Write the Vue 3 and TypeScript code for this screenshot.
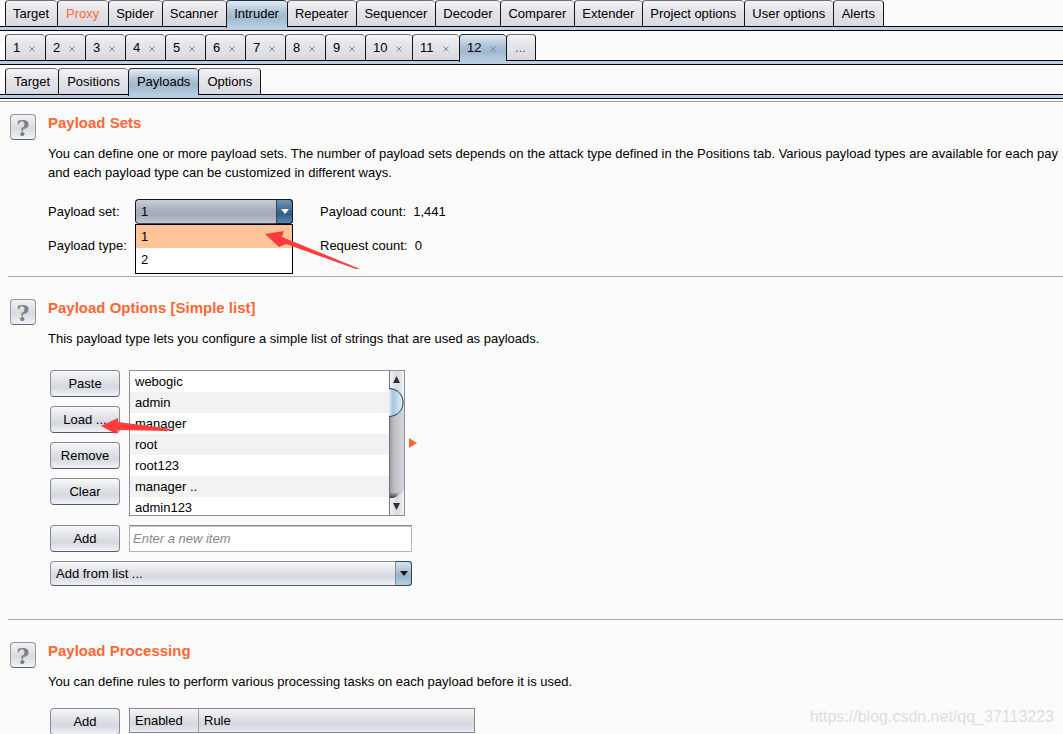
<script setup lang="ts">
import { ref } from 'vue'

interface Tab {
  label: string
  alert?: boolean
}

const toolTabs: Tab[] = [
  { label: 'Target' },
  { label: 'Proxy', alert: true },
  { label: 'Spider' },
  { label: 'Scanner' },
  { label: 'Intruder' },
  { label: 'Repeater' },
  { label: 'Sequencer' },
  { label: 'Decoder' },
  { label: 'Comparer' },
  { label: 'Extender' },
  { label: 'Project options' },
  { label: 'User options' },
  { label: 'Alerts' },
]
const attackTabs: string[] = ['1', '2', '3', '4', '5', '6', '7', '8', '9', '10', '11', '12']
const panelTabs: string[] = ['Target', 'Positions', 'Payloads', 'Options']
const listActions: string[] = ['Paste', 'Load ...', 'Remove', 'Clear']
const payloads: string[] = ['webogic', 'admin', 'manager', 'root', 'root123', 'manager ..', 'admin123']
const setOptions: string[] = ['1', '2']

const activeTool = ref('Intruder')
const activeAttack = ref('12')
const activePanel = ref('Payloads')
const payloadSet = ref('1')
const newItem = ref('')
</script>

<template>
  <div class="page">
    <nav class="tabs">
      <button
        v-for="tab in toolTabs"
        :key="tab.label"
        type="button"
        class="tab tool"
        :class="{ active: tab.label === activeTool, alert: tab.alert }"
        @click="activeTool = tab.label"
      >{{ tab.label }}</button>
    </nav>
    <div class="rail"></div>

    <nav class="tabs">
      <button
        v-for="tab in attackTabs"
        :key="tab"
        type="button"
        class="tab numbered"
        :class="{ active: tab === activeAttack, double: tab.length > 1 }"
        @click="activeAttack = tab"
      >
        <span>{{ tab }}</span>
        <svg class="cross" viewBox="0 0 6 6" aria-hidden="true">
          <path d="M.5 .5 5.500 5.500M5.500 .5 .5 5.500" />
        </svg>
      </button>
      <button type="button" class="tab more">...</button>
    </nav>
    <div class="rail"></div>

    <nav class="tabs">
      <button
        v-for="tab in panelTabs"
        :key="tab"
        type="button"
        class="tab panel"
        :class="{ active: tab === activePanel }"
        @click="activePanel = tab"
      >{{ tab }}</button>
    </nav>
    <div class="rail"></div>

    <main class="content">
      <section class="section first">
        <button type="button" class="help">?</button>
        <div class="body">
          <h2>Payload Sets</h2>
          <p>
            You can define one or more payload sets. The number of payload sets depends on the attack type defined in the Positions tab. Various payload types are available for each pay<br />
            and each payload type can be customized in different ways.
          </p>
          <div class="fields">
            <label for="payload-set">Payload set:</label>
            <div class="combo dark">
              <select id="payload-set" v-model="payloadSet">
                <option v-for="o in setOptions" :key="o">{{ o }}</option>
              </select>
              <span class="drop"><svg viewBox="0 0 8 5"><path d="M0 0h8L4 5z" /></svg></span>
              <ul class="popup">
                <li
                  v-for="o in setOptions"
                  :key="o"
                  :class="{ chosen: o === payloadSet }"
                  @click="payloadSet = o"
                >{{ o }}</li>
              </ul>
              <svg class="pointer to-option" viewBox="0 0 96 40" aria-hidden="true">
                <path d="M0 3 19 0 17 6 95 38 91 38 21 13 14 16z" />
              </svg>
            </div>
            <span class="count">Payload count:&nbsp; 1,441</span>
            <span>Payload type:</span>
            <span></span>
            <span class="count">Request count:&nbsp; 0</span>
          </div>
        </div>
      </section>

      <section class="section options">
        <button type="button" class="help">?</button>
        <div class="body">
          <h2>Payload Options [Simple list]</h2>
          <p>This payload type lets you configure a simple list of strings that are used as payloads.</p>
          <div class="editor">
            <div class="actions">
              <div v-for="a in listActions" :key="a" class="action">
                <button type="button" class="btn">{{ a }}</button>
                <svg v-if="a === 'Load ...'" class="pointer to-load" viewBox="0 0 72 17" aria-hidden="true">
                  <path d="M0 8 17 0 17 4 71 11 66 13 17 12 15 16z" />
                </svg>
              </div>
            </div>
            <div class="listing">
              <ul class="items">
                <li v-for="(p, i) in payloads" :key="i">{{ p }}</li>
              </ul>
              <svg class="scroll" viewBox="0 0 15 144" aria-hidden="true">
                <defs>
                  <linearGradient id="track"><stop offset="0" stop-color="#96979e" /><stop offset=".35" stop-color="#bfc0c6" /><stop offset="1" stop-color="#d6d7dc" /></linearGradient>
                  <linearGradient id="cap"><stop offset="0" stop-color="#f4f5f6" /><stop offset=".55" stop-color="#d5d9dc" /><stop offset="1" stop-color="#f2f4f5" /></linearGradient>
                  <linearGradient id="thumb"><stop offset="0" stop-color="#dcebf6" /><stop offset=".3" stop-color="#a9c4dc" /><stop offset=".6" stop-color="#c2dbed" /><stop offset="1" stop-color="#dcf2fd" /></linearGradient>
                  <linearGradient id="shade" x2="0" y2="1"><stop offset="0" stop-color="#444" stop-opacity="0" /><stop offset="1" stop-color="#333" /></linearGradient>
                </defs>
                <rect width="15" height="144" fill="url(#track)" />
                <path d="M0 0h15v30Q13 17 0 17z" fill="url(#cap)" />
                <path d="M0 121h11L6 127H0z" fill="url(#shade)" />
                <path d="M0 144V127h3Q11 126 15 119v25z" fill="url(#cap)" />
                <path d="M0 17.500Q14 18 14 31.500T0 45.500z" fill="url(#thumb)" />
                <path d="M0 17.500C9 18 14 24 14 31.500S9 45 0 45.500" fill="none" stroke="#243d54" />
                <path d="M.5 0v17M.5 46v98" stroke="#74767f" fill="none" />
                <path d="M7.500 5 11 12H4zM4 132h7L7.500 139z" fill="#2e2f31" />
              </svg>
            </div>
            <svg class="marker" viewBox="0 0 8 10" aria-hidden="true"><path d="M0 0 8 5 0 10z" /></svg>
          </div>
          <div class="entry">
            <button type="button" class="btn">Add</button>
            <input v-model="newItem" type="text" placeholder="Enter a new item" aria-label="Enter a new item" />
          </div>
          <div class="combo light">
            <select aria-label="Add from list ...">
              <option>Add from list ...</option>
            </select>
            <span class="drop"><svg viewBox="0 0 8 5"><path d="M0 0h8L4 5z" /></svg></span>
          </div>
        </div>
      </section>

      <section class="section">
        <button type="button" class="help">?</button>
        <div class="body">
          <h2>Payload Processing</h2>
          <p>You can define rules to perform various processing tasks on each payload before it is used.</p>
          <div class="rules">
            <button type="button" class="btn">Add</button>
            <table>
              <thead>
                <tr><th class="enabled">Enabled</th><th>Rule</th></tr>
              </thead>
            </table>
          </div>
        </div>
      </section>
    </main>
    <div class="watermark">https://blog.csdn.net/qq_37113223</div>
  </div>
</template>

<style>
body {
  margin: 0;
  background: #fbfbfb;
}
</style>

<style scoped>
.page {
  position: relative;
  height: 100vh;
  overflow: hidden;
  font: 13px/19px "Liberation Sans", Arial, sans-serif;
  color: #000;
  background: #fbfbfb;
}
.page * {
  box-sizing: border-box;
}
button,
select,
input {
  font: inherit;
  color: inherit;
  margin: 0;
}
svg {
  display: block;
}
ul {
  list-style: none;
  margin: 0;
  padding: 0;
}

/* tab strips */
.tabs {
  display: flex;
  height: 26px;
  padding-left: 5px;
}
.tabs ~ .tabs {
  margin-top: 3px;
}
.tab {
  flex: none;
  height: 26px;
  padding: 0 8px 0 7px;
  border: 1px solid #15151f;
  border-top-color: #6f6f76;
  border-right-width: 0;
  border-bottom: 0;
  border-radius: 4px 4px 0 0;
  background: linear-gradient(#f4f4f7, #e4e4e9 40%, #d9dae0);
  white-space: nowrap;
}
.tab:last-child {
  border-right-width: 1px;
}
.tab.tool {
  min-width: 51px;
}
.tab.panel {
  padding-left: 8px;
}
.tab.alert {
  color: #ff6633;
}
.tab.active {
  position: relative;
  z-index: 1;
  height: 28px;
  padding-bottom: 2px;
  border-top-color: #1c3144;
  background: linear-gradient(#e3ebf2, #b3c8d9 35%, #a0b8ce 60%, #b8d0e3);
}
.tab.numbered {
  display: flex;
  align-items: center;
  gap: 9px;
  width: 40px;
}
.tab.numbered.double {
  width: 47px;
}
.tab.more {
  width: 30px;
  color: #555;
}
.cross {
  flex: none;
  width: 6px;
  height: 6px;
  margin-top: 2px;
}
.cross path {
  stroke: #888;
  fill: none;
}
.rail {
  height: 5px;
  border: solid #000011;
  border-width: 1px 0;
  background: #b8cfe2;
}

/* sections */
.content {
  margin-top: 2px;
  border-top: 1px solid #9a96a6;
}
.section {
  display: grid;
  grid-template-columns: 26px minmax(0, 1fr);
  column-gap: 12px;
  align-items: start;
  margin-left: 8px;
  padding: 22px 0 0 2px;
}
.section + .section {
  border-top: 1px solid #a6a8b2;
}
.section.first {
  padding: 12px 0 18px 2px;
}
.section.options {
  padding-bottom: 33px;
}
.help {
  width: 26px;
  height: 26px;
  padding: 0;
  border: 1px solid #94969c;
  border-bottom-color: #62656c;
  border-radius: 4px;
  background: linear-gradient(#f1f2f5, #d8dbe1 55%, #f0f2f9);
  color: #808080;
  font: bold 22px/26px "DejaVu Serif", serif;
}
h2 {
  margin: 0;
  font-size: 15px;
  line-height: 18px;
  color: #ff6633;
}
p {
  margin: 12px 0 0;
  white-space: nowrap;
}

/* combo boxes */
.fields {
  display: grid;
  grid-template-columns: 80px 158px auto;
  column-gap: 7px;
  grid-auto-rows: 25px;
  row-gap: 9px;
  align-items: center;
  justify-content: start;
  margin-top: 17px;
}
.count {
  margin-left: 20px;
}
.combo {
  position: relative;
  height: 25px;
}
.combo select {
  appearance: none;
  display: block;
  width: 100%;
  height: 25px;
  padding: 0 24px 0 5px;
  border: 1px solid #8a8d95;
  border-bottom-color: #555b66;
  border-radius: 4px;
  background: linear-gradient(#f8f8fa, #dfe1e6 45%, #d5d8df 65%, #eef1f8);
}
.combo.dark select {
  border-color: #14161c;
  border-bottom-color: #3c4658;
  background: linear-gradient(#c9ced6, #a9afbb 45%, #a3a9b6 65%, #c0c6d6);
}
.drop {
  position: absolute;
  top: 0;
  right: 0;
  display: grid;
  place-items: center;
  width: 17px;
  height: 25px;
  border: 1px solid #2d475d;
  border-left-color: #7890a5;
  border-radius: 0 4px 4px 0;
  background: linear-gradient(#d8e3ec, #adc3d5 40%, #98b2c9 60%, #b8d0e4);
  pointer-events: none;
}
.dark .drop {
  border-color: #101c28;
  border-left-color: #2b4a66;
  background: linear-gradient(#7195b4, #3f6a91 45%, #345d85 60%, #5b86ad);
}
.drop svg {
  width: 8px;
  height: 5px;
  fill: #161616;
}
.dark .drop svg {
  fill: #fff;
}
.popup {
  position: absolute;
  z-index: 2;
  top: 25px;
  left: 0;
  right: 0;
  height: 50px;
  border: 1px solid #000;
  background: #fff;
}
.popup li {
  height: 23px;
  padding-left: 5px;
  line-height: 23px;
}
.popup .chosen {
  background: #ffc599;
}
.pointer {
  position: absolute;
  z-index: 3;
  fill: #ff3b3b;
  pointer-events: none;
}
.to-option {
  left: 130px;
  top: 32px;
  width: 96px;
  height: 40px;
}
.to-load {
  left: 51px;
  top: 12px;
  width: 72px;
  height: 17px;
}

/* payload list editor */
.btn {
  flex: none;
  display: block;
  width: 70px;
  height: 27px;
  padding: 0;
  border: 1px solid #888b92;
  border-bottom-color: #565a63;
  border-radius: 4px;
  background: linear-gradient(#f8f8fa, #e1e3e7 40%, #d5d8df 65%, #f0f2f9);
}
.editor,
.entry,
.rules {
  display: flex;
  column-gap: 9px;
  padding-left: 2px;
}
.editor {
  margin-top: 22px;
}
.rules {
  margin-top: 17px;
}
.actions {
  display: flex;
  flex-direction: column;
  gap: 9px;
}
.action {
  position: relative;
}
.listing {
  display: flex;
  width: 276px;
  height: 146px;
  border: 1px solid #8e8f9c;
  background: #fff;
}
.items {
  flex: 1;
  overflow: hidden;
}
.items li {
  height: 21px;
  padding-left: 5px;
  line-height: 21px;
}
.items li:nth-child(even) {
  background: #f2f2f2;
}
.scroll {
  flex: none;
  width: 15px;
  height: 144px;
}
.marker {
  align-self: center;
  width: 8px;
  height: 10px;
  margin-left: -5px;
  fill: #ff6633;
}
.entry {
  margin-top: 9px;
}
.entry input {
  width: 283px;
  height: 27px;
  padding: 0 3px;
  border: 1px solid #b4b4b6;
  border-top-color: #8a8a8c;
  background: #fff;
  box-shadow: inset 0 1px 0 #c4c4c6;
}
.entry input::placeholder {
  color: #888;
  font-style: italic;
  opacity: 1;
}
.combo.light {
  width: 362px;
  margin: 9px 0 0 2px;
}

/* rules table */
table {
  width: 346px;
  height: 25px;
  border-collapse: collapse;
  border: 1px solid #85888f;
  background: linear-gradient(#f6f6f8, #dfe0e5 45%, #d6d8de 70%, #e9edf5);
}
th {
  padding: 0 5px;
  font-weight: normal;
  text-align: left;
}
th.enabled {
  width: 69px;
  border-right: 1px solid #9a9ca4;
}

.watermark {
  position: absolute;
  right: 9px;
  bottom: 8px;
  font-size: 16px;
  color: #dedede;
}
</style>
